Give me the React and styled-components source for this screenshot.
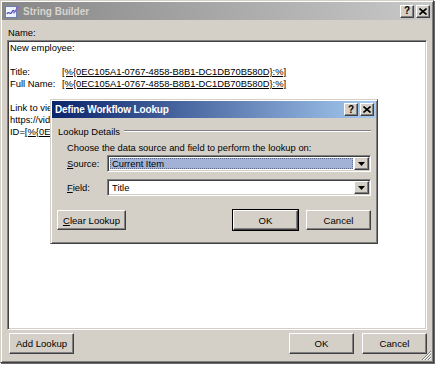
import React from 'react';
import styled, { createGlobalStyle, css } from 'styled-components';

const FONT = `"Liberation Sans", Arial, sans-serif`;

const Global = createGlobalStyle`
  html, body { margin: 0; padding: 0; background: #fff; }
  body { font-family: ${FONT}; }
`;

const raised = css`
  border: 1px solid;
  border-color: #fff #404040 #404040 #fff;
  box-shadow: inset -1px -1px #808080, inset 1px 1px #d4d0c8;
`;

const frame = css`
  border: 1px solid;
  border-color: #d4d0c8 #404040 #404040 #d4d0c8;
  box-shadow: inset 1px 1px #fff, inset -1px -1px #808080;
`;

const sunken = css`
  border: 1px solid;
  border-color: #808080 #fff #fff #808080;
  box-shadow: inset 1px 1px #404040, inset -1px -1px #d4d0c8;
`;

const Page = styled.div`
  position: relative;
  width: 440px;
  height: 369px;
  overflow: hidden;
  background: #fff;
`;

const Window = styled.div`
  ${frame}
  position: relative;
  box-sizing: border-box;
  width: ${(p) => p.$w}px;
  height: ${(p) => p.$h}px;
  padding: 1px;
  background: #d4d0c8;
  display: flex;
  flex-direction: column;
  font-family: ${FONT};
  font-size: 9.4px;
  color: #000;
  box-shadow: inset 1px 1px #fff, inset -1px -1px #808080,
    1px 1px 0 #6a6a6a;
`;

const Dialog = styled(Window)`
  position: absolute;
  left: ${(p) => p.$x}px;
  top: ${(p) => p.$y}px;
  box-shadow: inset 1px 1px #fff, inset -1px -1px #808080;
`;

const TitleBar = styled.div`
  flex: none;
  height: ${(p) => p.$h}px;
  display: flex;
  align-items: center;
  gap: 3px;
  padding: 0 2px 0 ${(p) => (p.$active ? 3 : 2)}px;
  background: ${(p) =>
    p.$active
      ? 'linear-gradient(to right, #0a246a, #a6caf0)'
      : 'linear-gradient(to right, #878787, #c8c8c8)'};
  color: ${(p) => (p.$active ? '#fff' : '#d8d5ce')};
  font: bold 10px ${FONT};
  letter-spacing: ${(p) => (p.$active ? '-0.15px' : '0')};
`;

const TitleText = styled.div`
  flex: 1;
  white-space: nowrap;
`;

const CaptionButtons = styled.div`
  display: flex;
  gap: 2px;
`;

const CaptionButton = styled.div`
  ${raised}
  box-sizing: border-box;
  width: 14px;
  height: 13px;
  background: #d4d0c8;
  display: flex;
  align-items: center;
  justify-content: center;
  color: #000;
  font: bold 10px ${FONT};
  line-height: 1;
`;

const AppIcon = () => (
  <svg width="16" height="15" viewBox="0 0 16 15">
    <rect x="1.5" y="2.5" width="11" height="11" fill="#eef2ff" stroke="#6a7fb8" />
    <path d="M3 10 C5 6, 6 12, 8 8 S10 9, 11 7" fill="none" stroke="#3a4fb0" strokeWidth="1.3" />
    <path d="M9 9 L14 2 L15 3 L10 10 Z" fill="#8a5fc8" />
  </svg>
);

const CloseGlyph = () => (
  <svg width="8" height="7" viewBox="0 0 8 7">
    <path d="M0.5 0.5 L7.5 6.5 M7.5 0.5 L0.5 6.5" stroke="#000" strokeWidth="1.6" />
  </svg>
);

const Body = styled.div`
  flex: 1;
  display: flex;
  flex-direction: column;
  padding: 0 5px;
`;

const FieldLabel = styled.div`
  margin-top: 7px;
  margin-bottom: 1px;
  line-height: 12px;
  padding-left: 1px;
`;

const Editor = styled.div`
  ${sunken}
  box-sizing: border-box;
  height: 290px;
  background: #fff;
  padding: 1px 2px;
  line-height: 12px;
  overflow: hidden;
`;

const Line = styled.div`
  height: 12px;
  white-space: nowrap;
  display: flex;
`;

const LineLabel = styled.span`
  width: 52px;
  flex: none;
`;

const Token = styled.span`
  text-decoration: underline;
  text-underline-offset: 1px;
`;

const ButtonRow = styled.div`
  margin-top: 3px;
  display: flex;
  gap: 8px;
  padding: 0 0 0 2px;
`;

const Spacer = styled.div`
  flex: 1;
`;

const Button = styled.div`
  ${raised}
  box-sizing: border-box;
  width: ${(p) => p.$w || 65}px;
  height: ${(p) => p.$h || 21}px;
  background: #d4d0c8;
  display: flex;
  align-items: center;
  justify-content: center;
  white-space: nowrap;
  font-size: 9.6px;
  ${(p) =>
    p.$default &&
    css`
      outline: 1px solid #000;
      outline-offset: 0;
      border-color: #fff #404040 #404040 #fff;
    `}
`;

const Grip = styled.svg`
  position: absolute;
  right: 1px;
  bottom: 1px;
`;

const DialogBody = styled.div`
  flex: 1;
  display: flex;
  flex-direction: column;
  padding: 0 5px;
`;

const Section = styled.div`
  margin-top: 7px;
  height: 12px;
  display: flex;
  align-items: center;
  gap: 4px;
  padding-left: 1px;
`;

const Rule = styled.div`
  flex: 1;
  border-top: 1px solid #808080;
  border-bottom: 1px solid #fff;
`;

const Hint = styled.div`
  margin-top: 5px;
  line-height: 12px;
  padding-left: 10px;
  white-space: nowrap;
`;

const FieldGrid = styled.div`
  margin-top: 1px;
  display: grid;
  grid-template-columns: 50px 1fr;
  grid-auto-rows: 17px;
  row-gap: 7px;
  align-items: center;
`;

const GridLabel = styled.div`
  padding-left: 10px;
`;

const Combo = styled.div`
  ${sunken}
  box-sizing: border-box;
  height: 17px;
  background: #fff;
  padding: 1px;
  display: flex;
  gap: 1px;
`;

const ComboValue = styled.div`
  flex: 1;
  margin: 1px 0 1px 1px;
  padding-left: 2px;
  line-height: 11px;
  background: ${(p) => (p.$selected ? '#a2b2d6' : 'transparent')};
  outline: ${(p) => (p.$selected ? '1px dotted #5a6a8a' : 'none')};
  outline-offset: -1px;
`;

const DropButton = styled.div`
  ${raised}
  box-sizing: border-box;
  width: 15px;
  background: #d4d0c8;
  display: flex;
  align-items: center;
  justify-content: center;
`;

const Arrow = () => (
  <svg width="7" height="4" viewBox="0 0 7 4">
    <path d="M0 0 H7 L3.5 4 Z" fill="#000" />
  </svg>
);

const DialogButtons = styled.div`
  margin-top: 14px;
  display: flex;
  gap: 8px;
`;

const TOKEN = '[%{0EC105A1-0767-4858-B8B1-DC1DB70B580D}:%]';

export default function App() {
  return (
    <>
      <Global />
      <Page>
        <Window $w={434} $h={363}>
          <TitleBar $h={18}>
            <AppIcon />
            <TitleText>String Builder</TitleText>
            <CaptionButtons>
              <CaptionButton>?</CaptionButton>
              <CaptionButton>
                <CloseGlyph />
              </CaptionButton>
            </CaptionButtons>
          </TitleBar>
          <Body>
            <FieldLabel>Name:</FieldLabel>
            <Editor>
              <Line>New employee:</Line>
              <Line />
              <Line>
                <LineLabel>Title:</LineLabel>
                <Token>{TOKEN}</Token>
              </Line>
              <Line>
                <LineLabel>Full Name:</LineLabel>
                <Token>{TOKEN}</Token>
              </Line>
              <Line />
              <Line>Link to view the item:</Line>
              <Line>https://videos/Lists/Emp/DispForm.aspx?</Line>
              <Line>
                ID=<Token>[%{'{'}0EC105A1-0767-4858:ID%]</Token>
              </Line>
            </Editor>
            <ButtonRow>
              <Button>Add Lookup</Button>
              <Spacer />
              <Button>OK</Button>
              <Button>Cancel</Button>
            </ButtonRow>
          </Body>
          <Grip width="11" height="11" viewBox="0 0 11 11">
            <path d="M10 1 L1 10 M10 4 L4 10 M10 7 L7 10" stroke="#808080" strokeWidth="1" />
            <path d="M10 2 L2 10 M10 5 L5 10 M10 8 L8 10" stroke="#fff" strokeWidth="1" />
          </Grip>
        </Window>

        <Dialog $x={50} $y={99} $w={328} $h={145}>
          <TitleBar $h={17} $active>
            <TitleText>Define Workflow Lookup</TitleText>
            <CaptionButtons>
              <CaptionButton>?</CaptionButton>
              <CaptionButton>
                <CloseGlyph />
              </CaptionButton>
            </CaptionButtons>
          </TitleBar>
          <DialogBody>
            <Section>
              Lookup Details
              <Rule />
            </Section>
            <Hint>Choose the data source and field to perform the lookup on:</Hint>
            <FieldGrid>
              <GridLabel>
                <u>S</u>ource:
              </GridLabel>
              <Combo>
                <ComboValue $selected>Current Item</ComboValue>
                <DropButton>
                  <Arrow />
                </DropButton>
              </Combo>
              <GridLabel>
                <u>F</u>ield:
              </GridLabel>
              <Combo>
                <ComboValue>Title</ComboValue>
                <DropButton>
                  <Arrow />
                </DropButton>
              </Combo>
            </FieldGrid>
            <DialogButtons>
              <Button $w={69} $h={20}>
                <u>C</u>lear Lookup
              </Button>
              <Spacer />
              <Button $h={20} $default>
                OK
              </Button>
              <Button $h={20}>Cancel</Button>
            </DialogButtons>
          </DialogBody>
        </Dialog>
      </Page>
    </>
  );
}
